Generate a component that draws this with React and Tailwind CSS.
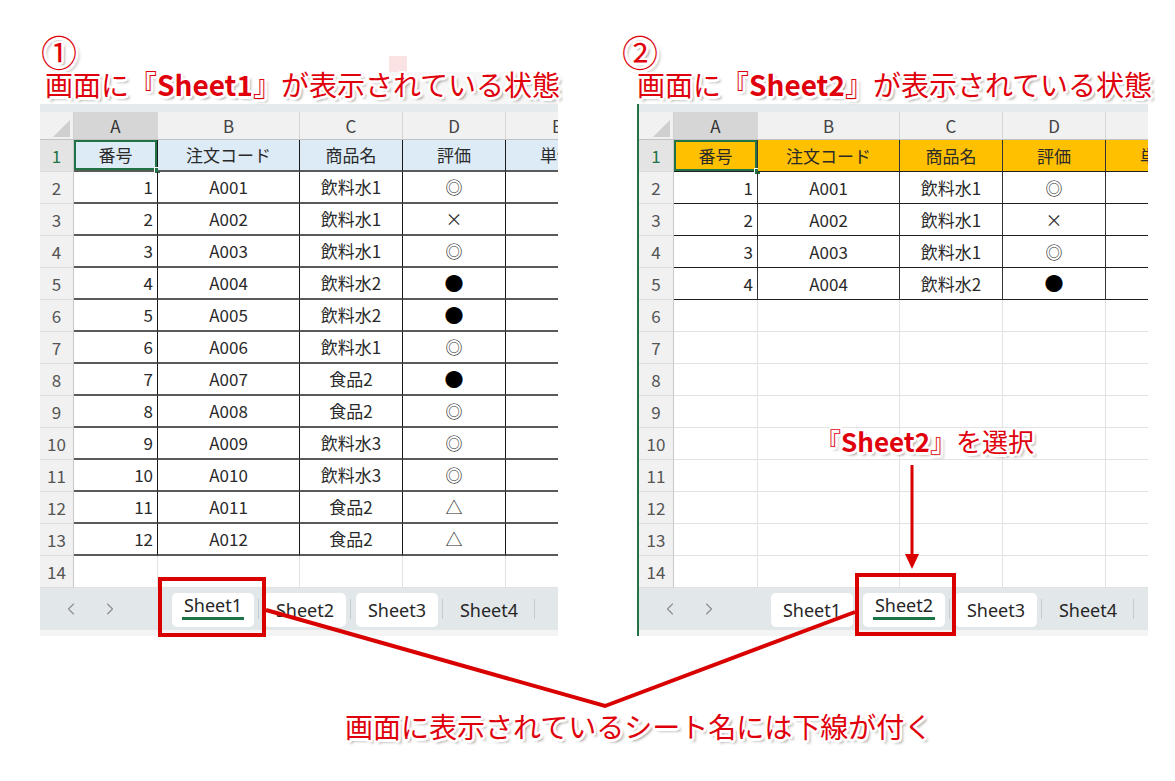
import { ChevronLeft, ChevronRight } from 'lucide-react';

const OUTLINE = '[text-shadow:2.5px_0_0_#fff,-2.5px_0_0_#fff,0_2.5px_0_#fff,0_-2.5px_0_#fff,2px_2px_0_#fff,-2px_2px_0_#fff,2px_-2px_0_#fff,-2px_-2px_0_#fff,3px_3px_3px_rgba(0,0,0,0.45)]';

const HEAD = ['番号', '注文コード', '商品名', '評価', '単価'];
const COLS = ['A', 'B', 'C', 'D', 'E'];
const WIDTHS = ['w-[84px]', 'w-[142px]', 'w-[103px]', 'w-[103px]', 'w-[103px]'];

const ROWS = [
  [1, 'A001', '飲料水1', '◎'],
  [2, 'A002', '飲料水1', '×'],
  [3, 'A003', '飲料水1', '◎'],
  [4, 'A004', '飲料水2', '●'],
  [5, 'A005', '飲料水2', '●'],
  [6, 'A006', '飲料水1', '◎'],
  [7, 'A007', '食品2', '●'],
  [8, 'A008', '食品2', '◎'],
  [9, 'A009', '飲料水3', '◎'],
  [10, 'A010', '飲料水3', '◎'],
  [11, 'A011', '食品2', '△'],
  [12, 'A012', '食品2', '△'],
];

function TabBar({ active }) {
  const tabs = ['Sheet1', 'Sheet2', 'Sheet3', 'Sheet4'];
  return (
    <div className="h-[42px] w-[600px] bg-[#e2e8ea] flex items-center font-['Noto_Sans',sans-serif] text-[18px] text-[#262626]">
      <div className="w-[127px] h-full flex items-center pl-[21px] gap-[19px] text-[#8c8c8c]">
        <ChevronLeft size={20} strokeWidth={1.3} />
        <ChevronRight size={20} strokeWidth={1.3} />
      </div>
      {tabs.map((t, i) => (
        <div key={t} className="w-[92px] h-full flex items-center">
          <div className={`ml-[5px] w-[82px] h-[34px] mt-[2px] rounded-[5px] flex items-center justify-center ${i < 3 ? 'bg-white' : ''}`}>
            {i === active ? (
              <span className="leading-[22px] pb-[1px] px-[2px] -mt-[6px] border-b-[3px] border-[#1d7446]">{t}</span>
            ) : (
              <span className="leading-[22px]">{t}</span>
            )}
          </div>
          <div className="ml-[4px] w-px h-[20px] bg-[#c6ccce]" />
        </div>
      ))}
    </div>
  );
}

function Sheet({ right }) {
  const data = right ? ROWS.slice(0, 4) : ROWS;
  const rh = right ? 'w-[35px]' : 'w-[34px]';
  return (
    <div className={right ? 'w-[511px] overflow-hidden border-l-2 border-[#217346]' : 'w-[518px] overflow-hidden'}>
      <div className="h-[8px] bg-[#e5ebed]" />
      <div className="flex h-[28px] w-[600px] bg-[#f1f1f1] border-b border-[#c2c2c2] text-[17px] text-[#444]">
        <div className={`${rh} shrink-0 h-full border-r border-[#d0d0d0] flex items-end justify-end`}>
          <svg width="24" height="22" viewBox="0 0 24 22"><polygon points="21,3 21,20 4,20" fill="#cfcfcf" /></svg>
        </div>
        {COLS.map((c, i) => (
          <div key={c} className={`${WIDTHS[i]} shrink-0 h-full flex items-center justify-center border-r border-[#d6d6d6] ${i === 0 ? 'bg-[#d6d6d6] text-[#333]' : ''}`}>
            {c}
          </div>
        ))}
      </div>
      {Array.from({ length: 14 }, (_, k) => k + 1).map((r) => {
        const row = r === 1 ? HEAD : data[r - 2];
        return (
          <div key={r} className="flex h-[32px] w-[600px] text-[17px] text-[#2a2a2a]">
            <div className={`${rh} shrink-0 flex items-center justify-center border-r border-r-[#c8c8c8] border-b border-b-[#dcdcdc] ${r === 1 ? 'bg-[#e4e4e4] text-[#217346]' : 'bg-[#f1f1f1] text-[#555]'}`}>
              {r}
            </div>
            {WIDTHS.map((w, i) => {
              let cls;
              if (r === 1) {
                cls = right
                  ? 'bg-[#ffc000] border-b border-b-[#1f1f1f] border-r border-r-[#333]'
                  : 'bg-[#ddebf7] border-b-2 border-b-[#5a5a5a] border-r border-r-[#1a1a1a]';
              } else if (row) {
                cls = right
                  ? 'border-b border-b-[#1f1f1f] border-r border-r-[#333]'
                  : 'border-b-2 border-b-[#5a5a5a] border-r border-r-[#1a1a1a]';
              } else {
                cls = 'border-b border-b-[#e2e2e2] border-r border-r-[#e2e2e2]';
              }
              const val = row ? row[i] : '';
              const align = r > 1 && i === 0 ? 'justify-end pr-[4px]' : 'justify-center';
              return (
                <div key={i} className={`relative ${w} shrink-0 flex items-center ${align} ${cls}`}>
                  <span className={row && i === 3 && r > 1 && val === '●' ? 'text-[19px] text-black' : ''}>{val}</span>
                  {r === 1 && i === 0 && (
                    <>
                      <div className="absolute inset-0 border-2 border-[#217346]" />
                      <div className="absolute -right-[4px] -bottom-[4px] w-[7px] h-[7px] bg-[#217346] border border-white" />
                    </>
                  )}
                </div>
              );
            })}
          </div>
        );
      })}
      <TabBar active={right ? 1 : 0} />
      <div className="h-[6px] bg-[#f4f4f4]" />
    </div>
  );
}

export default function App() {
  const red = '#d90000';
  return (
    <div className="relative isolate w-[1175px] h-[781px] bg-white overflow-hidden font-['Noto_Sans_CJK_JP','Noto_Sans',sans-serif]">
      <div className="absolute -z-10 left-[389px] top-[56px] w-[18px] h-[24px] bg-[#fbe3e3]" />
      <div className="absolute -z-10 left-[389px] top-[72px] w-[168px] h-[34px] bg-[#f7f7f7]" />

      <div className="flex pt-[36px]">
        <div className="ml-[40px] w-[518px]">
          <div className={`h-[28px] pl-[1px] text-[36px] leading-[30px] text-[#e0000b] ${OUTLINE}`}>①</div>
          <div className={`h-[40px] pl-[5px] flex items-center whitespace-nowrap text-[28px] font-normal text-[#e0000b] ${OUTLINE}`}>
            画面に『<span className="font-bold">Sheet1</span>』が表示されている状態
          </div>
          <Sheet />
        </div>
        <div className="ml-[64px] w-[530px]">
          <div className={`h-[28px] pl-0 text-[36px] leading-[30px] text-[#e0000b] ${OUTLINE}`}>②</div>
          <div className={`h-[40px] pl-[15px] flex items-center whitespace-nowrap text-[28px] font-normal text-[#e0000b] ${OUTLINE}`}>
            画面に『<span className="font-bold">Sheet2</span>』が表示されている状態
          </div>
          <div className="pl-[15px]">
            <Sheet right />
          </div>
        </div>
      </div>

      <p className={`mt-[70px] pl-[345px] whitespace-nowrap text-[28px] leading-[40px] font-normal text-[#e0000b] ${OUTLINE}`}>
        画面に表示されているシート名には下線が付く
      </p>

      <div className={`absolute left-[815px] top-[423px] whitespace-nowrap text-[26px] leading-[36px] font-normal text-[#e0000b] ${OUTLINE}`}>
        『<span className="font-bold">Sheet2</span>』を選択
      </div>

      <svg className="absolute left-0 top-0 pointer-events-none" width="1175" height="781">
        <polyline points="266,610 605,706 855,612" fill="none" stroke={red} strokeWidth="4" strokeLinejoin="miter" />
        <line x1="912" y1="465" x2="912" y2="556" stroke={red} strokeWidth="3" />
        <polygon points="905,554 919,554 912,569" fill={red} />
        <rect x="160" y="579" width="104" height="56" fill="none" stroke={red} strokeWidth="4" />
        <rect x="857" y="575" width="97" height="59" fill="none" stroke={red} strokeWidth="4" />
      </svg>
    </div>
  );
}
